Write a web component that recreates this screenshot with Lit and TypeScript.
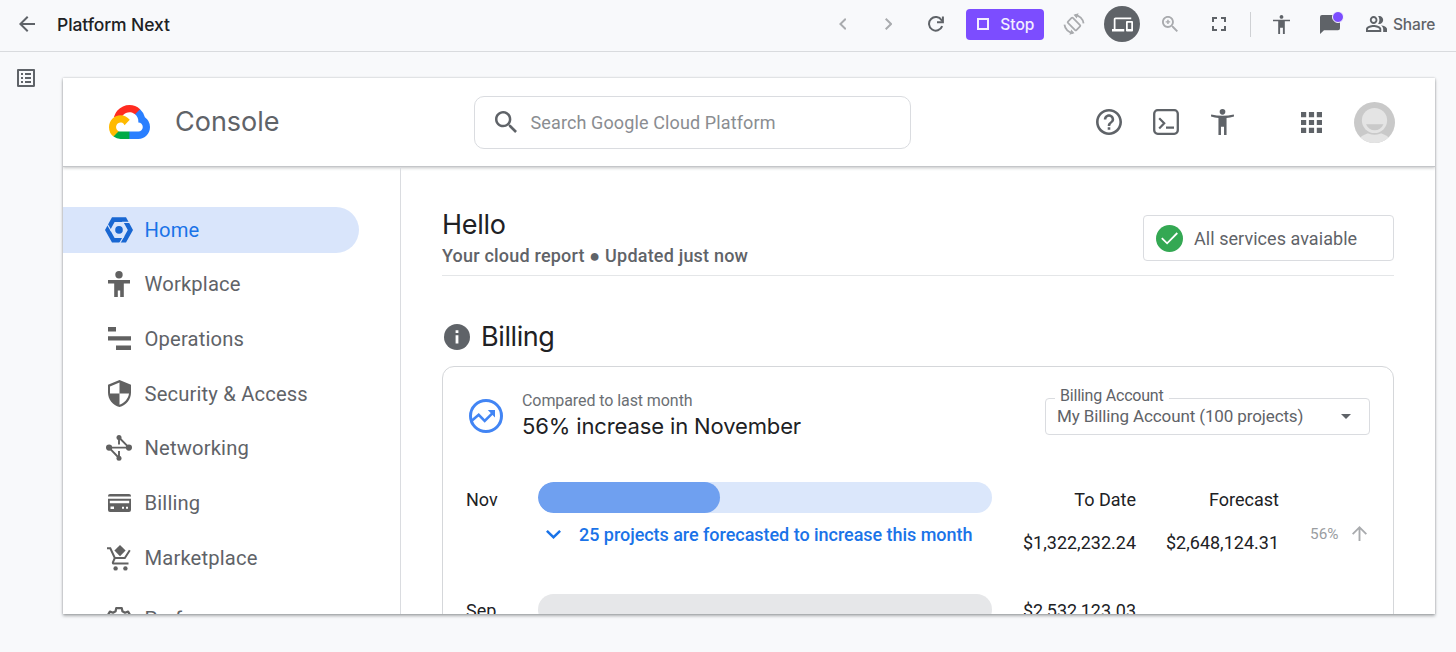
import { LitElement, html, svg, css } from "lit";
import { customElement, property } from "lit/decorators.js";

const p = (d: string) => svg`<path d=${d} fill="currentColor" fill-rule="evenodd"></path>`;

const icons: Record<string, { box: string; body: unknown }> = {
  back: { box: "4 4 16 16", body: p("M20 11H7.83l5.59-5.59L12 4l-8 8 8 8 1.41-1.41L7.83 13H20v-2z") },
  up: { box: "4 4 16 16", body: p("M4 12l1.41 1.41L11 7.83V20h2V7.83l5.58 5.59L20 12l-8-8-8 8z") },
  left: { box: "8 6 7.4 12", body: p("M15.41 7.41L14 6l-6 6 6 6 1.41-1.41L10.83 12z") },
  right: { box: "8.6 6 7.4 12", body: p("M10 6L8.59 7.41 13.17 12l-4.58 4.59L10 18l6-6z") },
  down: { box: "6 8.6 12 7.4", body: p("M16.59 8.59L12 13.17 7.41 8.59 6 10l6 6 6-6z") },
  reload: { box: "0 0 16 16", body: svg`<path d="M14.2 10.2A6.8 6.8 0 1 1 13.6 4.2L14.3 5" fill="none" stroke="currentColor" stroke-width="2"/><path d="M14.9 0.4V6.2H9" fill="none" stroke="currentColor" stroke-width="2"/>` },
  stop: { box: "0 0 12 12", body: svg`<rect x="1" y="1" width="10" height="10" fill="none" stroke="currentColor" stroke-width="2"/>` },
  rotate: { box: "0 0 24 24", body: svg`<rect x="8.2" y="5.5" width="7.600" height="13" rx="1" transform="rotate(-45 12 12)" fill="none" stroke="currentColor" stroke-width="1.900"/><path d="M13 2.200A10.500 10.500 0 0 1 22.400 11.400M11 21.800A10.500 10.500 0 0 1 1.600 12.600" fill="none" stroke="currentColor" stroke-width="2"/><path d="M11.500 2L17 .2 15 6zM12.500 22L7 23.800 9 18z" fill="currentColor"/>` },
  devices: { box: "0 0 24 24", body: p("M4 6h18V4H4c-1.1 0-2 .9-2 2v11H0v3h14v-3H4V6zm19 2h-6c-.55 0-1 .45-1 1v10c0 .55.45 1 1 1h6c.55 0 1-.45 1-1V9c0-.55-.45-1-1-1zm-1 9h-4v-7h4v7z") },
  zoom: { box: "3 3 17.5 17.5", body: p("M15.5 14h-.79l-.28-.27C15.41 12.59 16 11.11 16 9.5 16 5.91 13.09 3 9.5 3S3 5.91 3 9.5 5.91 16 9.5 16c1.61 0 3.09-.59 4.23-1.57l.27.28v.79l5 4.99L20.49 19l-4.99-5zm-6 0C7.01 14 5 11.99 5 9.5S7.01 5 9.5 5 14 7.01 14 9.5 11.99 14 9.5 14zm2.5-4h-1.7v1.8H8.7V10H7V8.8h1.7V7h1.6v1.8H12z") },
  search: { box: "3 3 17.5 17.5", body: p("M15.5 14h-.79l-.28-.27C15.41 12.59 16 11.11 16 9.5 16 5.91 13.09 3 9.5 3S3 5.91 3 9.5 5.91 16 9.5 16c1.61 0 3.09-.59 4.23-1.57l.27.28v.79l5 4.99L20.49 19l-4.99-5zm-6 0C7.01 14 5 11.99 5 9.5S7.01 5 9.5 5 14 7.01 14 9.5 11.99 14 9.5 14z") },
  full: { box: "5 5 14 14", body: p("M7 14H5v5h5v-2H7v-3zm-2-4h2V7h3V5H5v5zm12 7h-3v2h5v-5h-2v3zM14 5v2h3v3h2V5h-5z") },
  person: { box: "3 2 18 20", body: p("M12 2c1.1 0 2 .9 2 2s-.9 2-2 2-2-.9-2-2 .9-2 2-2zm9 6.500h-5.500v13.500h-2v-6.500h-3v6.500H8.500V8.500H3V7h18z") },
  personWide: { box: "1.500 2 21 24", body: svg`<circle cx="12" cy="4.600" r="2.600" fill="currentColor"/><path d="M1.700 7Q12 9.600 22.300 7L22.600 9Q19 10.100 15.700 10.300V26H13.400V18.400H10.600V26H8.300V10.300Q5 10.100 1.400 9z" fill="currentColor"/>` },
  workplace: { box: "0 0 22 26", body: svg`<circle cx="11" cy="3.700" r="3.700" fill="currentColor"/><path d="M0 9H22V12.500H15.800V26H12.200V19.500H9.800V26H6.200V12.500H0z" fill="currentColor"/>` },
  chat: { box: "0 0 20 20", body: p("M2 0H18Q20 0 20 2V14Q20 16 18 16H4L0 20V2Q0 0 2 0z") },
  share: { box: "1 4 22 16", body: p("M16.670 13.130C18.040 14.060 19 15.320 19 17v3h4v-3c0-2.180-3.570-3.470-6.330-3.870zM15 12c2.210 0 4-1.790 4-4s-1.790-4-4-4c-.47 0-.91.1-1.330.24C14.500 5.270 15 6.580 15 8s-.5 2.730-1.330 3.760c.42.14.86.24 1.330.24zM9 12c2.210 0 4-1.790 4-4s-1.790-4-4-4-4 1.790-4 4 1.790 4 4 4zm0-6c1.100 0 2 .9 2 2s-.9 2-2 2-2-.9-2-2 .9-2 2-2zM9 13c-2.670 0-8 1.340-8 4v3h16v-3c0-2.660-5.330-4-8-4zm6 5H3v-.99C3.200 16.290 6.300 15 9 15s5.800 1.290 6 2v1z") },
  list: { box: "3 3 18 18", body: p("M11 7h6v2h-6zm0 4h6v2h-6zm0 4h6v2h-6zM7 7h2v2H7zm0 4h2v2H7zm0 4h2v2H7zM20.1 3H3.9c-.5 0-.9.4-.9.9v16.200c0 .4.4.9.9.9h16.200c.4 0 .9-.5.9-.9V3.900c0-.5-.5-.9-.9-.9zM19 19H5V5h14v14z") },
  help: { box: "2 2 20 20", body: p("M11 18h2v-2h-2v2zm1-16C6.480 2 2 6.480 2 12s4.480 10 10 10 10-4.480 10-10S17.520 2 12 2zm0 18c-4.410 0-8-3.590-8-8s3.590-8 8-8 8 3.590 8 8-3.590 8-8 8zm0-14c-2.210 0-4 1.790-4 4h2c0-1.100.9-2 2-2s2 .9 2 2c0 2-3 1.750-3 5h2c0-2.250 3-2.500 3-5 0-2.210-1.790-4-4-4z") },
  terminal: { box: "0 0 26 26", body: svg`<rect x="1.200" y="1.200" width="23.600" height="23.600" rx="3.500" fill="none" stroke="currentColor" stroke-width="2.300"/><path d="M6.200 9.200L11.200 14.300 6.200 19.400M13 18.700H21" fill="none" stroke="currentColor" stroke-width="2.200"/>` },
  grid: { box: "0 0 21 21", body: p("M0 0h5.200v5.200H0zM7.900 0h5.200v5.200H7.900zM15.800 0H21v5.200h-5.200zM0 7.900h5.200v5.200H0zM7.900 7.900h5.200v5.200H7.900zM15.800 7.900H21v5.200h-5.200zM0 15.800h5.200V21H0zM7.900 15.800h5.200V21H7.900zM15.800 15.800H21V21h-5.200z") },
  avatar: { box: "0 0 41 41", body: svg`<defs><clipPath id="disc"><circle cx="20.500" cy="20.500" r="20.500"/></clipPath></defs><g clip-path="url(#disc)"><rect width="41" height="41" fill="#c9c9c9"/><ellipse cx="20.500" cy="42" rx="17" ry="11.500" fill="#e4e4e4"/><circle cx="20.500" cy="18.500" r="14.300" fill="#c9c9c9"/><circle cx="20.500" cy="18.500" r="12.600" fill="#e4e4e4"/><path d="M12 22.300H29.500Q26.500 28.300 20.700 28.300T12 22.300z" fill="#c9c9c9"/></g>` },
  home: { box: "0 0 28 26", body: svg`<path d="M7 .3H21L28 13 21 25.500H7L0 13zM9.600 4.900L5.200 13 9.600 20.900H18.400L22.800 13 18.400 4.900z" fill="currentColor" fill-rule="evenodd"/><path d="M17 5.400H27M18.900 19L14.400 26.800M6.400 14.300L1.600 6" stroke="#d9e5fb" stroke-width="1.200"/><circle cx="14" cy="12.900" r="3.800" fill="currentColor"/>` },
  operations: { box: "0 0 23 23", body: p("M0 0H8V4.600H0zM0 9.300H23V13.400H0zM8 18.400H23V23H8z") },
  security: { box: "0 0 23 27", body: p("M11.500 0L23 4.800V12.500C23 19.500 18.200 25.300 11.500 27 4.800 25.300 0 19.500 0 12.500V4.800zM11.500 2.600L2 6.600V13.400H11.500zM11.500 13.400V24.700C16.500 23 20.300 18.500 21 13.400z") },
  network: { box: "0 0 26 26", body: svg`<path d="M3 12.600H23M13 2.500V9.500M13 16V23M13 2.500L23 12.600M3 12.600L13 23" fill="none" stroke="currentColor" stroke-width="1.900"/><circle cx="3.100" cy="12.600" r="3.100" fill="currentColor"/><circle cx="22.900" cy="12.600" r="3.100" fill="currentColor"/><circle cx="13" cy="2.600" r="2.500" fill="currentColor"/><circle cx="13" cy="23.200" r="2.500" fill="currentColor"/>` },
  card: { box: "0 0 23 18", body: p("M2 0H21Q23 0 23 2V2.500H0V2Q0 0 2 0zM0 4.800H23V16Q23 18 21 18H2Q0 18 0 16zM1.800 6.800V9.200H21.200V6.800zM2.500 12.500V15H6V12.500zM14 12.700V14.700H16V12.700zM18 12.700V14.700H20V12.700z") },
  cart: { box: "0 0 24 26", body: svg`<path d="M0 3.300H3.300L7.800 13H17.800L22.800 5.200M7.800 13L5.900 17.300Q5.500 18.600 7 18.600H21.500" fill="none" stroke="currentColor" stroke-width="2"/><path d="M13 0L18.600 5.600 13 11.200 7.400 5.600z" fill="currentColor"/><circle cx="8.600" cy="23.400" r="2.200" fill="currentColor"/><circle cx="18.400" cy="23.400" r="2.200" fill="currentColor"/>` },
  gear: { box: "0 0 24 24", body: svg`<path d="M9.200 1.100H14.800L15.400 4.200L18 5.700L21.100 4.600L23.700 9L21.200 11.100V13.100L23.700 15L21.100 19.500L18 18.400L15.400 19.900L14.800 23H9.200L8.600 19.900L6 18.400L2.900 19.500L.3 15L2.800 13.100V11.100L.3 9L2.900 4.600L6 5.700L8.600 4.200z" fill="none" stroke="currentColor" stroke-width="2.200" stroke-linejoin="round"/><circle cx="12" cy="12" r="4" fill="none" stroke="currentColor" stroke-width="2"/>` },
  info: { box: "0 0 26 26", body: svg`<circle cx="13" cy="13" r="13" fill="currentColor"/><path d="M11.600 6.300H14.400V9H11.600zM11.600 11.300H14.400V19.500H11.600z" fill="#fff"/>` },
  trend: { box: "0 0 34 34", body: svg`<circle cx="17" cy="17" r="15.500" fill="none" stroke="currentColor" stroke-width="3"/><path d="M3 21.500L9.700 15.800 15.700 21.800 24.300 13.300" fill="none" stroke="currentColor" stroke-width="2.600"/><path d="M18.800 11H26V18.500L23.500 16 21.200 13.500z" fill="currentColor"/>` },
  check: { box: "0 0 27 27", body: svg`<circle cx="13.500" cy="13.500" r="13.500" fill="#34a853"/><path d="M5.800 13.200L11.100 18.300 21.300 8" fill="none" stroke="#fff" stroke-width="1.800"/>` },
  caret: { box: "0 0 10 5", body: p("M0 0H10L5 5z") },
  cloud: { box: "0 0 256 206", body: svg`<path fill="#ff2b20" d="M170.252 56.819l22.253-22.253 1.483-9.370C153.437-11.677 88.976-7.496 52.420 33.920 42.267 45.423 34.734 59.764 30.717 74.573l7.970-1.123 44.505-7.340 3.436-3.513c19.797-21.742 53.270-24.667 76.128-6.168l7.496.39z"/><path fill="#2a7fff" d="M224.205 73.918a100.249 100.249 0 0 0-30.217-48.722l-31.232 31.232a55.515 55.515 0 0 1 20.379 44.037v5.544c15.350 0 27.797 12.445 27.797 27.796 0 15.352-12.446 27.485-27.797 27.485h-55.671l-5.466 5.934v33.340l5.466 5.231h55.670c39.930.311 72.553-31.494 72.864-71.424a72.303 72.303 0 0 0-31.793-60.453"/><path fill="#00aa47" d="M71.870 205.796h55.593V161.290H71.870a27.275 27.275 0 0 1-11.400-2.498l-7.887 2.420-22.409 22.253-1.952 7.652a71.940 71.940 0 0 0 43.648 14.679"/><path fill="#ffba00" d="M71.870 61.425C31.940 61.664-.237 94.228.001 134.158a72.301 72.301 0 0 0 28.222 56.880l32.248-32.246c-13.990-6.322-20.208-22.786-13.887-36.776 6.322-13.990 22.786-20.208 36.775-13.888a27.796 27.796 0 0 1 13.888 13.888l32.248-32.248A72.224 72.224 0 0 0 71.870 61.425"/>` },
};

@customElement("ui-icon")
class UiIcon extends LitElement {
  @property() name = "";
  @property({ type: Number }) w = 20;
  @property({ type: Number }) h = 20;
  static styles = css`
    :host { display: flex; flex: none; align-items: center; justify-content: center; }
    svg { display: block; flex: none; }
  `;
  render() {
    const i = icons[this.name];
    return html`<svg width=${this.w} height=${this.h} viewBox=${i.box} preserveAspectRatio="none">${i.body}</svg>`;
  }
}

const nav = [
  { id: "home", label: "Home", icon: "home", w: 28, h: 26 },
  { id: "workplace", label: "Workplace", icon: "workplace", w: 22, h: 26 },
  { id: "operations", label: "Operations", icon: "operations", w: 23, h: 23 },
  { id: "security", label: "Security & Access", icon: "security", w: 23, h: 27 },
  { id: "networking", label: "Networking", icon: "network", w: 26, h: 26 },
  { id: "billing", label: "Billing", icon: "card", w: 23, h: 18 },
  { id: "marketplace", label: "Marketplace", icon: "cart", w: 24, h: 26 },
  { id: "preferences", label: "Preferences", icon: "gear", w: 24, h: 24 },
];

@customElement("app-root")
class AppRoot extends LitElement {
  static styles = css`
    :host { display: flex; flex-direction: column; height: 652px; background: #f8f9fb; overflow: hidden;
      font-family: Roboto, "Liberation Sans", sans-serif; color: #202124; white-space: nowrap; }
    * { box-sizing: border-box; }
    .display { font-family: Inter, Roboto, sans-serif; }
    .toolbar { flex: none; height: 52px; padding-bottom: 3px; display: flex; align-items: center; border-bottom: 1px solid #d9dbde; color: #5f6368; padding-left: 19px; }
    .doc { margin-left: 22px; font-size: 17.500px; font-weight: 500; color: #202124; letter-spacing: -0.1px; }
    .tools { margin-left: auto; display: flex; align-items: center; padding-right: 21px; }
    .dim { color: #a9abae; }
    .nav-slot { width: 46px; }
    .reload-slot { width: 50px; }
    .stop { width: 78px; height: 31px; margin-left: 5px; border-radius: 4px; background: #7c4dff; color: #f3eeff; display: flex; align-items: center; padding-left: 11px; gap: 11px; font-size: 15.500px; font-weight: 500; }
    .rotate-slot { width: 60px; }
    .round { width: 36px; height: 36px; border-radius: 50%; background: #5f6368; color: #fff; display: flex; align-items: center; justify-content: center; }
    .zoom-slot { width: 60px; }
    .full-slot { width: 38px; }
    .rule { width: 1px; height: 25px; background: #cfd1d4; margin: 0 0 0 11.700px; }
    .person-slot { width: 61px; }
    .chat { position: relative; width: 20px; margin-left: 8px; }
    .dot { position: absolute; right: -4px; top: -4px; width: 12px; height: 12px; border-radius: 50%; background: #7c4dff; border: 1px solid #f8f9fb; }
    .share { display: flex; align-items: center; width: 69px; gap: 6px; margin-left: 26px; font-size: 15.500px; font-weight: 500; letter-spacing: -.15px; }
    .stage { flex: 1; display: flex; align-items: flex-start; padding: 17px 21px 0 17px; }
    .outline { color: #5f6368; }
    .frame { margin: 9px 0 0 28px; flex: 1; height: 536px; background: #fff; box-shadow: 0 2px 3px rgba(60,64,67,.4), 0 0 2px rgba(60,64,67,.3); }
    .clip { height: 536px; overflow: hidden; display: flex; flex-direction: column; }
    .head { flex: none; height: 89px; display: flex; align-items: center; padding: 0 40.500px 0 46px; border-bottom: 1px solid #c4c6c9; box-shadow: 0 1px 3px rgba(60,64,67,.3); color: #5f6368; }
    .console { width: 298.500px; margin-left: 25px; padding-bottom: 1px; font-size: 27px; letter-spacing: 0; }
    .search { width: 437px; height: 53px; border: 1px solid #dadce0; border-radius: 10px; display: flex; align-items: center; padding-left: 20px; gap: 14px; font-size: 18px; letter-spacing: .12px; color: #8a8d91; }
    .search ui-icon { color: #5f6368; }
    .actions { margin-left: auto; display: flex; align-items: center; }
    .actions .gap { width: 31px; } .actions .gap-b { width: 32px; } .actions .gap-l { width: 67px; } .actions .gap-a { width: 32px; }
    .body { flex: 1; min-height: 0; display: flex; }
    .side { flex: none; width: 338px; border-right: 1px solid #dadce0; padding-top: 40px; overflow: hidden; }
    .item { width: 296px; height: 46px; margin-bottom: 8.700px; padding-bottom: 1px; display: flex; align-items: center; padding-left: 39px; gap: 8.500px; border-radius: 0 23px 23px 0; font-size: 20.200px; letter-spacing: .16px; color: #5f6368; }
    .item:last-child { margin-top: 15px; }
    .item ui-icon { width: 34px; color: #616161; }
    .item.on { background: #d9e5fb; color: #1a73e8; }
    .item.on ui-icon { color: #1967d2; }
    .main { flex: 1; padding: 0 41px; overflow: hidden; }
    .hello { height: 109px; border-bottom: 1px solid #e4e6e8; display: flex; justify-content: space-between; padding-top: 40px; }
    .title { font-size: 27px; line-height: 34px; letter-spacing: -.4px; }
    .hello .title { padding-top: 1px; margin-bottom: -1px; letter-spacing: -.3px; }
    .sub { font-size: 18px; line-height: 24px; margin-top: 3px; font-weight: 500; letter-spacing: .2px; color: #5f6368; }
    .status { width: 251px; height: 46px; margin-top: 8px; border: 1px solid #dadce0; border-radius: 4px; display: flex; align-items: center; padding-left: 12px; gap: 11px; font-size: 18px; letter-spacing: .05px; color: #5f6368; }
    .section { display: flex; align-items: center; gap: 11px; height: 40px; margin: 41px 0 9px; padding-left: 2px; }
    .section ui-icon { color: #5f6368; }
    .card { height: 400px; border: 1px solid #d5d7da; border-radius: 12px; padding: 0 23px; }
    .summary { height: 115px; display: flex; padding: 22px 0 0 3px; }
    .summary > ui-icon { height: 54px; color: #4285f4; }
    .cmp { margin-left: 19px; flex: 1; }
    .small { font-size: 16px; line-height: 24px; letter-spacing: -.08px; color: #6b6f74; }
    .big { font-size: 22px; line-height: 26px; letter-spacing: -.13px; }
    .select { position: relative; width: 325px; height: 37px; margin-top: 9px; border: 1px solid #dadce0; border-radius: 4px; display: flex; align-items: center; justify-content: space-between; padding: 0 18px 0 11px; font-size: 17px; letter-spacing: -.12px; color: #5f6368; }
    .value { padding-bottom: 2px; }
    .legend { position: absolute; left: 9px; top: -14px; padding: 0 5px; background: #fff; font-size: 16px; line-height: 22px; letter-spacing: -.2px; }
    .row { display: grid; grid-template-columns: 72px 454px 144px 143px 1fr; height: 112px; }
    .month { font-size: 18px; line-height: 24px; padding-top: 6px; }
    .row.prev .month, .row.prev .num { padding-top: 5px; }
    .track { height: 31px; border-radius: 15.500px; background: #dbe7fb; overflow: hidden; }
    .track.past { background: #e6e7e9; }
    .fill { height: 31px; border-radius: 15.500px; background: #6fa0f0; }
    .link { display: flex; align-items: center; height: 24px; margin-top: 9px; padding-left: 8px; gap: 18px; font-size: 18px; font-weight: 500; letter-spacing: -.04px; color: #1a73e8; }
    .num { text-align: right; font-size: 18px; line-height: 24px; padding-top: 6px; }
    .num div { margin-top: 19px; }
    .pct { display: flex; align-items: center; justify-content: flex-end; gap: 13px; height: 24px; margin-top: 39.500px; padding-right: 3.500px; font-size: 15.300px; color: #9a9da1; }
    .pct ui-icon { color: #a9abae; }
  `;
  render() {
    return html`
      <div class="toolbar">
        <ui-icon name="back" w="16" h="16"></ui-icon>
        <div class="doc display">Platform Next</div>
        <div class="tools">
          <ui-icon class="nav-slot dim" name="left" w="7.5" h="12"></ui-icon>
          <ui-icon class="nav-slot dim" name="right" w="7.5" h="12"></ui-icon>
          <ui-icon class="reload-slot" name="reload" w="16" h="16"></ui-icon>
          <div class="stop display"><ui-icon name="stop" w="12" h="12"></ui-icon>Stop</div>
          <ui-icon class="rotate-slot dim" name="rotate" w="22" h="22"></ui-icon>
          <div class="round"><ui-icon name="devices" w="21" h="21"></ui-icon></div>
          <ui-icon class="zoom-slot dim" name="zoom" w="16" h="16"></ui-icon>
          <ui-icon class="full-slot" name="full" w="14" h="14"></ui-icon>
          <div class="rule"></div>
          <ui-icon class="person-slot" name="person" w="17" h="19"></ui-icon>
          <div class="chat"><ui-icon name="chat" w="20" h="19"></ui-icon><div class="dot"></div></div>
          <div class="share display"><ui-icon name="share" w="21" h="16"></ui-icon>Share</div>
        </div>
      </div>
      <div class="stage">
        <ui-icon name="list" w="18" h="18" class="outline"></ui-icon>
        <div class="frame"><div class="clip">
          <div class="head">
            <ui-icon name="cloud" w="41" h="34"></ui-icon>
            <div class="console display">Console</div>
            <div class="search"><ui-icon name="search" w="22" h="22"></ui-icon>Search Google Cloud Platform</div>
            <div class="actions">
              <ui-icon name="help" w="26" h="26"></ui-icon><div class="gap"></div>
              <ui-icon name="terminal" w="26" h="26"></ui-icon><div class="gap-b"></div>
              <ui-icon name="personWide" w="23" h="26"></ui-icon><div class="gap-l"></div>
              <ui-icon name="grid" w="21" h="21"></ui-icon><div class="gap-a"></div>
              <ui-icon name="avatar" w="41" h="41"></ui-icon>
            </div>
          </div>
          <div class="body">
            <div class="side">
              ${nav.map((n) => html`<div class="item ${n.id === "home" ? "on" : ""}"><ui-icon name=${n.icon} w=${n.w} h=${n.h}></ui-icon><span>${n.label}</span></div>`)}
            </div>
            <div class="main">
              <div class="hello">
                <div><div class="title display">Hello</div><div class="sub">Your cloud report ● Updated just now</div></div>
                <div class="status"><ui-icon name="check" w="27" h="27"></ui-icon>All services avaiable</div>
              </div>
              <div class="section"><ui-icon name="info" w="26" h="26"></ui-icon><div class="title display">Billing</div></div>
              <div class="card">
                <div class="summary">
                  <ui-icon name="trend" w="34" h="34"></ui-icon>
                  <div class="cmp"><div class="small">Compared to last month</div><div class="big display">56% increase in November</div></div>
                  <div class="select"><div class="legend">Billing Account</div><span class="value">My Billing Account (100 projects)</span><ui-icon name="caret" w="10" h="5"></ui-icon></div>
                </div>
                <div class="row">
                  <div class="month">Nov</div>
                  <div><div class="track"><div class="fill" style="width:40%"></div></div>
                    <div class="link"><ui-icon name="down" w="15" h="9"></ui-icon>25 projects are forecasted to increase this month</div></div>
                  <div class="num">To Date<div>$1,322,232.24</div></div>
                  <div class="num">Forecast<div>$2,648,124.31</div></div>
                  <div class="pct">56%<ui-icon name="up" w="15" h="15"></ui-icon></div>
                </div>
                <div class="row prev">
                  <div class="month">Sep</div>
                  <div><div class="track past"></div></div>
                  <div class="num">$2,532,123.03</div>
                </div>
              </div>
            </div>
          </div>
        </div></div>
      </div>`;
  }
}
